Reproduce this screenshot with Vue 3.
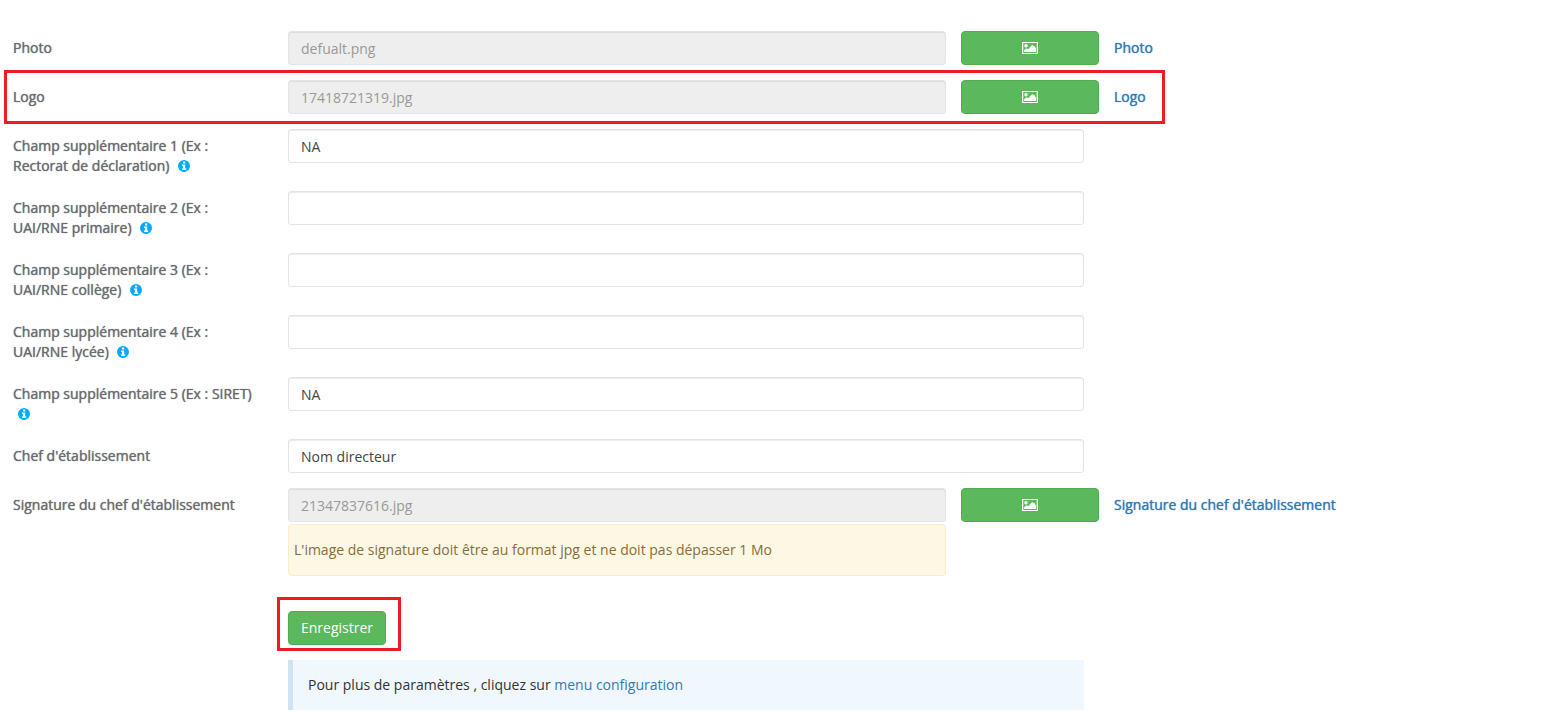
<script setup>
import { reactive } from 'vue'

const rows = reactive([
  { id: 'photo', label: 'Photo', value: 'defualt.png', file: true },
  { id: 'logo', label: 'Logo', value: '17418721319.jpg', file: true, marked: true },
  { id: 'champ1', label: 'Champ supplémentaire 1 (Ex : Rectorat de déclaration)', value: 'NA', info: true },
  { id: 'champ2', label: 'Champ supplémentaire 2 (Ex : UAI/RNE primaire)', value: '', info: true },
  { id: 'champ3', label: 'Champ supplémentaire 3 (Ex : UAI/RNE collège)', value: '', info: true },
  { id: 'champ4', label: 'Champ supplémentaire 4 (Ex : UAI/RNE lycée)', value: '', info: true },
  { id: 'champ5', label: 'Champ supplémentaire 5 (Ex : SIRET)', value: 'NA', info: true },
  { id: 'chef', label: "Chef d'établissement", value: 'Nom directeur' },
  {
    id: 'signature',
    label: "Signature du chef d'établissement",
    value: '21347837616.jpg',
    file: true,
    note: "L'image de signature doit être au format jpg et ne doit pas dépasser 1 Mo",
  },
])
</script>

<template>
  <form class="settings" @submit.prevent>
    <div v-for="row in rows" :key="row.id" class="row" :class="{ 'row-file': row.file }">
      <label class="label strong" :for="row.id">
        {{ row.label }}
        <svg v-if="row.info" class="info" viewBox="0 0 12 12" aria-hidden="true">
          <path
            fill-rule="evenodd"
            d="M6 0a6 6 0 1 1 0 12a6 6 0 1 1 0-12zM5 1.6V3.5H7.2V1.6zM4 4.4V6H5V8.4H4V10H8.2V8.4H7.2V4.4z"
          />
        </svg>
      </label>
      <div class="field">
        <input :id="row.id" v-model="row.value" class="control" type="text" :disabled="row.file" />
        <p v-if="row.note" class="note">{{ row.note }}</p>
      </div>
      <template v-if="row.file">
        <button class="btn" type="button" :aria-label="'Choisir : ' + row.label">
          <svg class="picture" viewBox="0 0 16 12" aria-hidden="true">
            <path
              fill-rule="evenodd"
              d="M.5 0h15a.5.5 0 0 1 .5.5v11a.5.5 0 0 1-.5.5H.5a.5.5 0 0 1-.5-.5V.5A.5.5 0 0 1 .5 0zM1.3 1v10h13.4V1z"
            />
            <circle cx="4" cy="3.7" r="1.8" />
            <path d="M2 10V8.2L4.7 6.2 6.4 7.2 10 3 11.6 4 12.4 4 14 6.6V10z" />
          </svg>
        </button>
        <a class="link strong" href="#">{{ row.label }}</a>
      </template>
      <span v-if="row.marked" class="frame frame-row"></span>
    </div>

    <div class="row row-save">
      <div class="field offset">
        <span class="save">
          <button class="btn" type="submit">Enregistrer</button>
          <span class="frame frame-save"></span>
        </span>
      </div>
    </div>

    <div class="row">
      <p class="callout offset">
        Pour plus de paramètres , cliquez sur <a href="#">menu configuration</a>
      </p>
    </div>
  </form>
</template>

<style>
body {
  margin: 0;
  background: #fff;
}
</style>

<style scoped>
.settings {
  display: flex;
  flex-direction: column;
  gap: 15px;
  padding: 31px 0 12px 13px;
  font-family: "Open Sans", "Liberation Sans", sans-serif;
  font-size: 14px;
  line-height: 20px;
  color: #333;
}

.row {
  position: relative;
  display: grid;
  grid-template-columns: 260fr 796fr 457fr;
  column-gap: 15px;
  align-items: start;
}

.row-file {
  grid-template-columns: 260fr 658fr 138fr 442fr;
}

.row-save {
  padding-top: 20px;
}

.offset {
  grid-column: 2;
}

.field {
  min-width: 0;
}

.label {
  padding: 7px 15px 0 0;
  color: #6a6c6f;
}

.strong {
  text-shadow: 0 0 1px currentColor;
}

.info {
  display: inline-block;
  width: 12px;
  height: 12px;
  margin-left: 5px;
  vertical-align: -1px;
  fill: #00aaff;
}

.control {
  display: block;
  box-sizing: border-box;
  width: 100%;
  height: 34px;
  padding: 6px 12px;
  border: 1px solid #e1e5e9;
  border-radius: 3px;
  background: #fff;
  box-shadow: inset 0 1px 1px rgba(0, 0, 0, 0.075);
  font: inherit;
  color: #444;
}

.control:disabled {
  background: #eee;
  color: #999;
}

.note {
  margin: 2px 0 0;
  padding: 15px 5px;
  border: 1px solid #faebcc;
  border-radius: 4px;
  background: #fcf8e3;
  color: #8a6d3b;
}

.btn {
  box-sizing: border-box;
  height: 34px;
  padding: 6px 12px;
  border: 1px solid #4cae4c;
  border-radius: 4px;
  background: #5cb85c;
  font: inherit;
  color: #fff;
  cursor: pointer;
}

.picture {
  display: block;
  width: 16px;
  height: 12px;
  margin: 0 auto;
  fill: #fff;
}

.link {
  padding-top: 7px;
}

a {
  color: #337ab7;
  text-decoration: none;
}

.save {
  position: relative;
  display: inline-block;
  vertical-align: top;
}

.save .btn {
  display: block;
}

.frame {
  position: absolute;
  border: 3px solid #ed1c24;
  pointer-events: none;
}

.frame-row {
  grid-column: 1 / 4;
  inset: -10px -66px -10px -9px;
}

.frame-save {
  inset: -14px -15px -6px -11px;
}

.callout {
  margin: 0;
  padding: 15px;
  border-left: 5px solid #d0e3f0;
  background: #f0f7fd;
}
</style>
